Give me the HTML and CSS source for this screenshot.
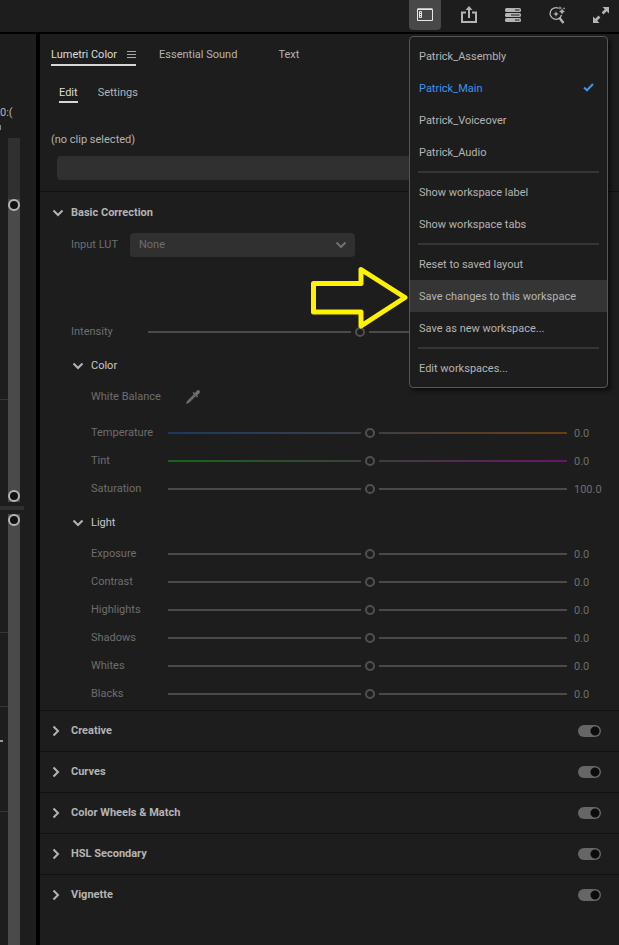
FILE: index.html
```html
<!DOCTYPE html>
<html lang="en">
<head>
<meta charset="utf-8">
<meta name="viewport" content="width=device-width, initial-scale=1">
<title>Lumetri Color</title>
<link rel="stylesheet" href="styles.css">
</head>
<body>
<div class="app">
  <header class="topbar">
    <div class="workspace">
      <button class="tool tool-active" type="button" aria-label="Workspaces" aria-expanded="true">
        <svg width="16" height="14" viewBox="0 0 16 14" fill="none" stroke="#e6e6e6"><path d="M.5 1.500h15v11H.5z"/><path d="M.5 1h15" stroke-width="1.500"/><path d="M2.500 3.500h2v6h-2zM2.500 5.500h2M2.500 7.500h2"/></svg>
      </button>
      <ul class="menu" role="menu">
        <li><button class="item" type="button" role="menuitem">Patrick_Assembly</button></li>
        <li><button class="item item-current" type="button" role="menuitem">Patrick_Main
          <svg class="check" width="11" height="9" viewBox="0 0 11 9" fill="none" stroke="#3b94f0" stroke-width="2"><path d="M1 4.500 4 7.300 10 1"/></svg></button></li>
        <li><button class="item" type="button" role="menuitem">Patrick_Voiceover</button></li>
        <li><button class="item" type="button" role="menuitem">Patrick_Audio</button></li>
        <li class="divider" role="separator"></li>
        <li><button class="item" type="button" role="menuitem">Show workspace label</button></li>
        <li><button class="item" type="button" role="menuitem">Show workspace tabs</button></li>
        <li class="divider" role="separator"></li>
        <li><button class="item" type="button" role="menuitem">Reset to saved layout</button></li>
        <li><button class="item item-hover" type="button" role="menuitem">Save changes to this workspace</button>
          <svg class="pointer" width="100" height="64" viewBox="0 0 100 64" fill="none" stroke="#fff200" stroke-width="5"><path stroke-linejoin="round" d="M3.500 17.500h47.500v-14L95 31.500 51 60v-14H3.500z"/></svg></li>
        <li><button class="item" type="button" role="menuitem">Save as new workspace...</button></li>
        <li class="divider" role="separator"></li>
        <li><button class="item" type="button" role="menuitem">Edit workspaces...</button></li>
      </ul>
    </div>
    <button class="tool" type="button" aria-label="Quick export">
      <svg width="18" height="18" viewBox="0 0 18 18" fill="none" stroke="#b4b4b4" stroke-width="2"><path d="M6 6.500H2V16h14V6.500h-4M9 12V3"/><path d="M9 0 5.500 4h7z" fill="#b4b4b4" stroke="none"/></svg>
    </button>
    <button class="tool" type="button" aria-label="Progress">
      <svg width="16" height="14" viewBox="0 0 16 14" fill="#b4b4b4"><rect width="16" height="4" rx="1.500"/><rect y="5" width="16" height="4" rx="1.500"/><rect y="10" width="16" height="4" rx="1.500"/><path d="M10 2h4.500M6 7h8.500M10 12h4.500" stroke="#1d1d1d" stroke-width="1.200"/></svg>
    </button>
    <button class="tool" type="button" aria-label="Improve">
      <svg width="18" height="18" viewBox="0 0 18 18" fill="none" stroke="#b4b4b4"><path d="M10.500 2.300A5.800 5.800 0 1 0 13.500 9" stroke-width="1.300"/><path d="m11.500 12 4 5" stroke-width="2.400"/><path d="m8 5 .8 2.200L11 8l-2.200.8L8 11l-.8-2.200L5 8l2.200-.8zM14 2.500l1 2 2 1-2 1-1 2-1-2-2-1 2-1zM12 0l.5 1.500 1.500.5-1.500.5L12 4l-.5-1.500L10 2l1.500-.5zM16 1l.4 1 1 .4-1 .4-.4 1-.4-1-1-.4 1-.4z" fill="#b4b4b4" stroke="none"/></svg>
    </button>
    <button class="tool" type="button" aria-label="Full screen">
      <svg width="18" height="18" viewBox="0 0 18 18" fill="#b4b4b4"><path d="M10.500 1H17v6.500l-2.300-2.300-3.200 3.200-1.900-1.900 3.200-3.200zM1 10.500V17h6.500l-2.300-2.300 3.200-3.200-1.900-1.900-3.200 3.200z"/></svg>
    </button>
  </header>

  <div class="columns">
    <aside class="timeline">
      <div class="timecode">0:(</div>
      <div class="tick"></div>
      <div class="video">
        <div class="lanes"><hr></div>
        <div class="scroll"><div class="grip"><i></i><i></i></div></div>
      </div>
      <div class="split"></div>
      <div class="audio">
        <div class="lanes"><hr><hr><hr class="mark"><hr></div>
        <div class="scroll"><div class="grip"><i></i></div></div>
      </div>
    </aside>

    <main class="panel">
      <nav class="tabs">
        <a class="tab tab-active" href="#lumetri">Lumetri Color
          <svg width="9" height="8" viewBox="0 0 9 8" stroke="#aaa"><path d="M0 .5h9M0 3.500h9M0 6.500h9"/></svg></a>
        <a class="tab" href="#sound">Essential Sound</a>
        <a class="tab" href="#text">Text</a>
      </nav>
      <nav class="subtabs">
        <a class="subtab subtab-active" href="#edit">Edit</a>
        <a class="subtab" href="#settings">Settings</a>
      </nav>
      <label class="clip" for="clip">(no clip selected)</label>
      <input class="clip-field" id="clip" type="text" disabled>

      <section class="basic">
        <h2><button class="heading" type="button" aria-expanded="true"><svg class="chev" width="12" height="12" viewBox="0 0 12 12"><path d="m1.500 3.500 4.500 4.500 4.500-4.500"/></svg>Basic Correction</button></h2>
        <div class="lut">
          <label for="lut">Input LUT</label>
          <span class="select"><select id="lut" disabled><option>None</option></select><svg class="chev" width="12" height="12" viewBox="0 0 12 12"><path d="m1.500 3.500 4.500 4.500 4.500-4.500"/></svg></span>
        </div>
        <div class="slider intensity"><label for="intensity">Intensity</label><input id="intensity" type="range" disabled><output></output></div>

        <h3><button class="heading" type="button" aria-expanded="true"><svg class="chev" width="12" height="12" viewBox="0 0 12 12"><path d="m1.500 3.500 4.500 4.500 4.500-4.500"/></svg>Color</button></h3>
        <div class="balance">
          <span class="balance-label">White Balance</span>
          <button class="dropper" type="button" aria-label="Pick white balance" disabled><svg width="16" height="16" viewBox="0 0 16 16"><path d="m9.500 5.500-7 7L2 14l1.500-.5 7-7" fill="none" stroke="#6e6e6e" stroke-width="1.300"/><path d="m7.500 4 1-1 1.300 1 2-2.300c1.600-1.700 4.200.6 2.700 2.500l-2.300 2.100 1 1.300-1 1z" fill="#6e6e6e"/></svg></button>
        </div>
        <div class="group">
          <div class="slider"><label for="temperature">Temperature</label><input class="temp" id="temperature" type="range" disabled><output>0.0</output></div>
          <div class="slider"><label for="tint">Tint</label><input class="tint" id="tint" type="range" disabled><output>0.0</output></div>
          <div class="slider"><label for="saturation">Saturation</label><input id="saturation" type="range" disabled><output>100.0</output></div>
        </div>

        <h3><button class="heading" type="button" aria-expanded="true"><svg class="chev" width="12" height="12" viewBox="0 0 12 12"><path d="m1.500 3.500 4.500 4.500 4.500-4.500"/></svg>Light</button></h3>
        <div class="group">
          <div class="slider"><label for="exposure">Exposure</label><input id="exposure" type="range" disabled><output>0.0</output></div>
          <div class="slider"><label for="contrast">Contrast</label><input id="contrast" type="range" disabled><output>0.0</output></div>
          <div class="slider"><label for="highlights">Highlights</label><input id="highlights" type="range" disabled><output>0.0</output></div>
          <div class="slider"><label for="shadows">Shadows</label><input id="shadows" type="range" disabled><output>0.0</output></div>
          <div class="slider"><label for="whites">Whites</label><input id="whites" type="range" disabled><output>0.0</output></div>
          <div class="slider"><label for="blacks">Blacks</label><input id="blacks" type="range" disabled><output>0.0</output></div>
        </div>
      </section>

      <section class="closed"><h2><button class="heading" type="button" aria-expanded="false"><svg class="chev" width="12" height="12" viewBox="0 0 12 12"><path d="m3.500 1.500 4.500 4.500-4.500 4.500"/></svg>Creative</button></h2><input class="toggle" type="checkbox" aria-label="Creative" checked></section>
      <section class="closed"><h2><button class="heading" type="button" aria-expanded="false"><svg class="chev" width="12" height="12" viewBox="0 0 12 12"><path d="m3.500 1.500 4.500 4.500-4.500 4.500"/></svg>Curves</button></h2><input class="toggle" type="checkbox" aria-label="Curves" checked></section>
      <section class="closed"><h2><button class="heading" type="button" aria-expanded="false"><svg class="chev" width="12" height="12" viewBox="0 0 12 12"><path d="m3.500 1.500 4.500 4.500-4.500 4.500"/></svg>Color Wheels &amp; Match</button></h2><input class="toggle" type="checkbox" aria-label="Color Wheels &amp; Match" checked></section>
      <section class="closed"><h2><button class="heading" type="button" aria-expanded="false"><svg class="chev" width="12" height="12" viewBox="0 0 12 12"><path d="m3.500 1.500 4.500 4.500-4.500 4.500"/></svg>HSL Secondary</button></h2><input class="toggle" type="checkbox" aria-label="HSL Secondary" checked></section>
      <section class="closed"><h2><button class="heading" type="button" aria-expanded="false"><svg class="chev" width="12" height="12" viewBox="0 0 12 12"><path d="m3.500 1.500 4.500 4.500-4.500 4.500"/></svg>Vignette</button></h2><input class="toggle" type="checkbox" aria-label="Vignette" checked></section>
    </main>
  </div>
</div>
</body>
</html>
```
FILE: styles.css
```css
:root {
  --bg: #1d1d1d;
  --text: #b4b4b4;
  --dim: #6e6e6e;
  --line: #4a4a4a;
  --field: #303030;
}

* { box-sizing: border-box; }

body {
  margin: 0;
  background: #000;
  color: var(--text);
  font: 11px/16px Roboto, sans-serif;
}

button, input, select {
  margin: 0;
  padding: 0;
  border: 0;
  background: none;
  color: inherit;
  font: inherit;
}

svg { display: block; flex: none; }
h2, h3 { margin: 0; font: inherit; }
a { color: inherit; text-decoration: none; }

.app {
  display: flex;
  flex-direction: column;
  min-height: 100vh;
}

/* Top bar */
.topbar {
  display: flex;
  justify-content: flex-end;
  gap: 12px;
  height: 32px;
  padding-right: 2px;
  margin-bottom: 2px;
  background: var(--bg);
}

.workspace { position: relative; }

.tool {
  display: grid;
  place-items: center;
  width: 32px;
  height: 30px;
  border-radius: 0 0 4px 4px;
}

.tool-active { background: #484848; }

.menu {
  position: absolute;
  z-index: 2;
  top: 36px;
  left: 0;
  width: 199px;
  margin: 0;
  padding: 3px 0;
  border: 1px solid #575757;
  border-radius: 4px;
  background: var(--bg);
  box-shadow: 3px 3px 4px #0008;
  list-style: none;
}

.menu li { position: relative; }

.item {
  display: flex;
  align-items: center;
  justify-content: space-between;
  width: 100%;
  height: 32px;
  padding: 2px 13px 0 9px;
  text-align: left;
}

.item-current { color: #3b94f0; }
.item-hover { background: #353535; }
.check { margin-bottom: 4px; }

.divider {
  height: 8px;
  margin: 0 8px;
  border: solid var(--bg);
  border-width: 3px 0;
  background: #353535;
}

.pointer {
  position: absolute;
  top: -14px;
  right: 100%;
}

/* Timeline edge */
.columns {
  display: flex;
  flex: 1;
  gap: 4px;
}

.timeline {
  display: flex;
  flex: 0 0 36px;
  flex-direction: column;
  background: var(--bg);
}

.timecode { margin-top: 71px; }

.tick {
  width: 1px;
  height: 5px;
  margin: 4px 0 8px;
  background: #888;
}

.video, .audio { display: flex; }
.video { height: 364px; }
.audio { flex: 1; }

.lanes { width: 8px; }

.lanes hr {
  height: 1px;
  margin: 0;
  border: 0;
  background: #353535;
}

.video hr { margin-top: 261px; }
.audio hr { margin-top: 73px; }
.audio hr:first-child { margin-top: 118px; }
.audio .mark { width: 3px; height: 2px; margin-top: 33px; background: #999; }
.audio .mark + hr { margin-top: 69px; }

.scroll {
  display: flex;
  width: 12px;
  background: var(--field);
}

.video .scroll { padding-top: 61px; }

.grip {
  display: flex;
  flex-direction: column;
  justify-content: space-between;
  background: var(--line);
}

.grip i {
  width: 12px;
  height: 12px;
  border: 2px solid #b4b4b4;
  border-radius: 50%;
  background: #111;
}

.split {
  width: 24px;
  height: 4px;
  margin: 4px 0;
  background: var(--field);
}

/* Panel */
.panel {
  flex: 1;
  min-width: 0;
  background: var(--bg);
}

.tabs {
  display: flex;
  gap: 23px;
  padding: 12px 11px 0;
}

.tab {
  display: flex;
  align-items: center;
  gap: 10px;
  height: 20px;
  border-bottom: 2px solid transparent;
}

.tab + .tab + .tab { margin-left: 18px; }

.tab-active, .subtab-active { border-color: #d6d6d6; color: #dcdcdc; }

.subtabs {
  display: flex;
  gap: 20px;
  padding: 19px 19px 0;
}

.subtab-active { border-bottom: 2px solid #d6d6d6; }

.clip { display: block; margin: 29px 11px 8px; }

.clip-field {
  display: block;
  width: calc(100% - 34px);
  height: 24px;
  margin: 0 17px 11px;
  border-radius: 4px;
  background: var(--field);
}

.basic {
  padding: 13px 0 8px;
  border-top: 1px solid #111;
}

.heading {
  display: flex;
  align-items: center;
  gap: 7px;
  margin-left: 12px;
}

h2 .heading { font-weight: 700; }
h3 .heading { margin-left: 32px; color: #c8c8c8; }

.chev path { fill: none; stroke: #b4b4b4; stroke-width: 2; }

.lut {
  display: flex;
  align-items: center;
  gap: 8px;
  margin: 12px 0 61px 31px;
  color: var(--dim);
}

.lut label { width: 51px; white-space: nowrap; }

.select {
  display: grid;
  width: 225px;
  align-items: center;
}

.select > * { grid-area: 1 / 1; }

.select select {
  height: 24px;
  padding: 0 9px;
  border-radius: 4px;
  background: var(--field);
  appearance: none;
  opacity: 1;
}

.select .chev { justify-self: end; margin-right: 8px; }
.select .chev path { stroke: #707070; }

.slider {
  display: grid;
  grid-template-columns: 77px 1fr 47px;
  align-items: center;
  height: 28px;
  padding-left: 51px;
  color: var(--dim);
}

.slider output { padding: 2px 0 0 2px; }
.intensity { padding-left: 31px; margin-bottom: 12px; }

.slider input {
  width: 100%;
  height: 18px;
  appearance: none;
  --track: var(--line), var(--line);
}

.slider .temp { --track: #1a3a63, #3c3f42, #6b3d14; }
.slider .tint { --track: #176417, #3c3f3c, #6a146a; }

.slider input::-webkit-slider-runnable-track {
  height: 18px;
  background: linear-gradient(90deg, var(--track)) 0 50% / calc(100% - 5px) 2px no-repeat;
}

.slider input::-webkit-slider-thumb {
  width: 10px;
  height: 10px;
  margin-top: 4px;
  border: 2px solid #505050;
  border-radius: 50%;
  background: var(--bg);
  box-shadow: 0 0 0 4px var(--bg);
  appearance: none;
}

.balance {
  display: flex;
  align-items: center;
  margin: 15px 0 14px 51px;
  color: var(--dim);
}

.balance-label { width: 94px; }

.group { margin-bottom: 12px; }
.group + h3 { margin-bottom: 9px; }
.group:last-child { margin-bottom: -6px; }

.closed {
  display: flex;
  align-items: center;
  justify-content: space-between;
  height: 41px;
  padding-right: 18px;
  border-top: 1px solid #111;
}

.closed .heading { margin-left: 10px; gap: 9px; }

.toggle {
  width: 23px;
  height: 12px;
  border-radius: 6px;
  background: radial-gradient(circle at 17px 6px, #0c0c0c 4px, #666 5px);
  appearance: none;
}
```
